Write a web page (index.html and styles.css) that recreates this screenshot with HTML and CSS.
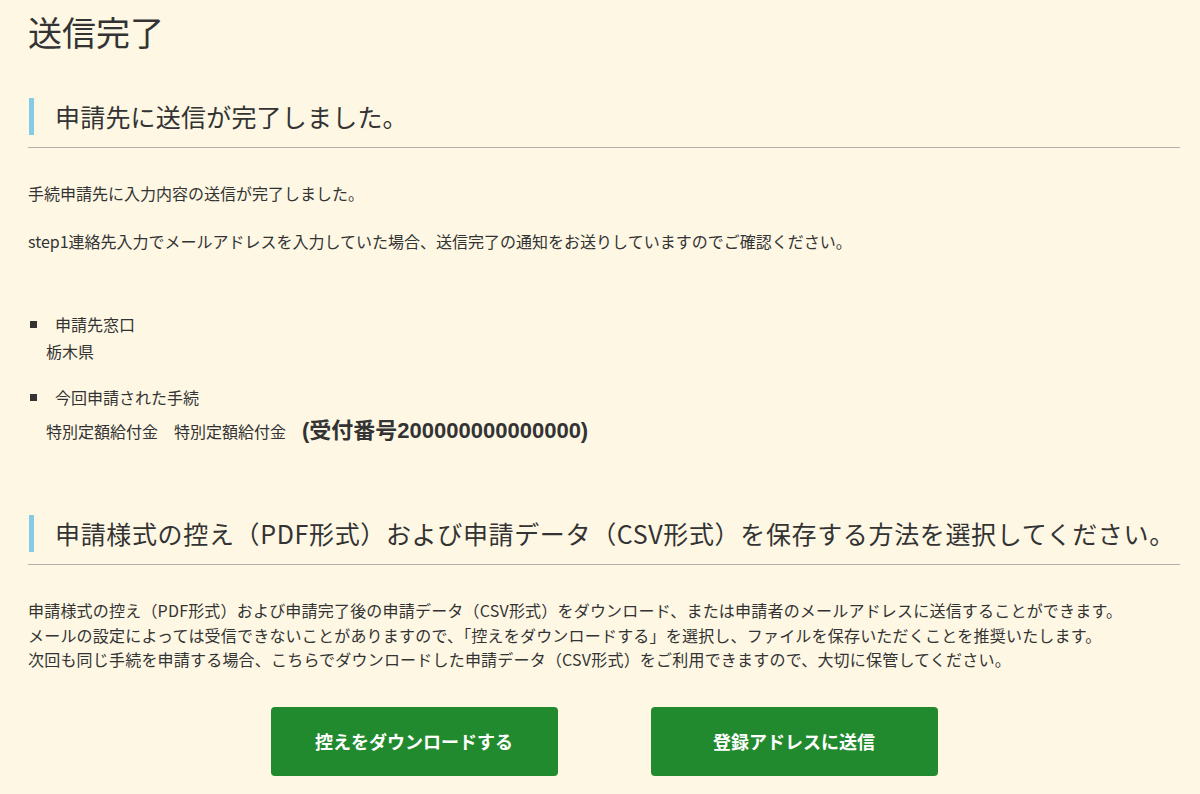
FILE: index.html
```html
<!DOCTYPE html>
<html lang="ja">
<head>
<meta charset="utf-8">
<title>送信完了</title>
<link rel="stylesheet" href="styles.css">
</head>
<body>
<div class="page">
  <h1 class="title">送信完了</h1>

  <div class="sec-head">
    <h2 class="sec-title">申請先に送信が完了しました。</h2>
  </div>

  <p class="text text--first">手続申請先に入力内容の送信が完了しました。</p>
  <p class="text text--next">step1連絡先入力でメールアドレスを入力していた場合、送信完了の通知をお送りしていますのでご確認ください。</p>

  <ul class="info">
    <li class="info-item">
      <div class="info-label">申請先窓口</div>
      <div class="info-value">栃木県</div>
    </li>
    <li class="info-item info-item--second">
      <div class="info-label">今回申請された手続</div>
      <div class="info-value info-value--proc">特別定額給付金　特別定額給付金<span class="receipt">(受付番号200000000000000)</span></div>
    </li>
  </ul>

  <div class="sec-head sec-head--second">
    <h2 class="sec-title sec-title--long">申請様式の控え（PDF形式）および申請データ（CSV形式）を保存する方法を選択してください。</h2>
  </div>

  <p class="text text--desc">申請様式の控え（PDF形式）および申請完了後の申請データ（CSV形式）をダウンロード、または申請者のメールアドレスに送信することができます。<br>メールの設定によっては受信できないことがありますので、「控えをダウンロードする」を選択し、ファイルを保存いただくことを推奨いたします。<br>次回も同じ手続を申請する場合、こちらでダウンロードした申請データ（CSV形式）をご利用できますので、大切に保管してください。</p>

  <div class="actions">
    <button class="btn" type="button">控えをダウンロードする</button>
    <button class="btn" type="button">登録アドレスに送信</button>
  </div>
</div>
</body>
</html>
```

FILE: styles.css
```css
html, body {
  margin: 0;
  padding: 0;
  background: #fdf7e4;
}

body {
  font-family: "Noto Sans CJK JP", "Noto Sans", sans-serif;
  color: #333333;
  font-size: 16px;
}

.page {
  padding: 12px 20px 0 28px;
}

.title {
  margin: 0;
  font-size: 34px;
  line-height: 40px;
  font-weight: normal;
  color: #333;
}

.sec-head {
  margin-top: 46px;
  padding-bottom: 12px;
  border-bottom: 1px solid #b3b1aa;
}

.sec-head--second {
  margin-top: 66px;
}

.sec-title {
  margin: 0 0 0 1px;
  border-left: 5px solid #86cbe6;
  padding-left: 21px;
  font-size: 25px;
  line-height: 37px;
  font-weight: normal;
  color: #333;
  white-space: nowrap;
  letter-spacing: 0.2px;
}

.sec-title--long {
  letter-spacing: 0.65px;
}

.text {
  margin: 0;
  font-size: 16px;
  line-height: 24px;
}

.text--first {
  margin-top: 33px;
}

.text--next {
  margin-top: 24px;
}

.text--desc {
  margin-top: 33px;
  line-height: 24.5px;
  white-space: nowrap;
  letter-spacing: 0.2px;
}

.info {
  list-style: none;
  margin: 59px 0 0 0;
  padding: 0;
}

.info-item--second {
  margin-top: 21px;
}

.info-label {
  display: flex;
  align-items: center;
  line-height: 24px;
}

.info-label::before {
  content: "";
  width: 7px;
  height: 7px;
  background: #333;
  margin-left: 2px;
  margin-right: 18px;
}

.info-value {
  margin-top: 2px;
  padding-left: 18px;
  line-height: 26px;
}

.info-value--proc {
  margin-top: 4px;
  line-height: 36px;
}

.receipt {
  margin-left: 16px;
  font-family: "Liberation Sans", "Noto Sans CJK JP", sans-serif;
  font-weight: bold;
  font-size: 22px;
  line-height: 36px;
}

.actions {
  margin-top: 35px;
  display: flex;
  justify-content: center;
  gap: 93px;
}

.btn {
  width: 287px;
  height: 69px;
  border: none;
  border-radius: 4px;
  background: #228a2e;
  color: #ffffff;
  font-family: "Noto Sans CJK JP", sans-serif;
  font-weight: bold;
  font-size: 18px;
  padding: 0;
  cursor: pointer;
}
```
